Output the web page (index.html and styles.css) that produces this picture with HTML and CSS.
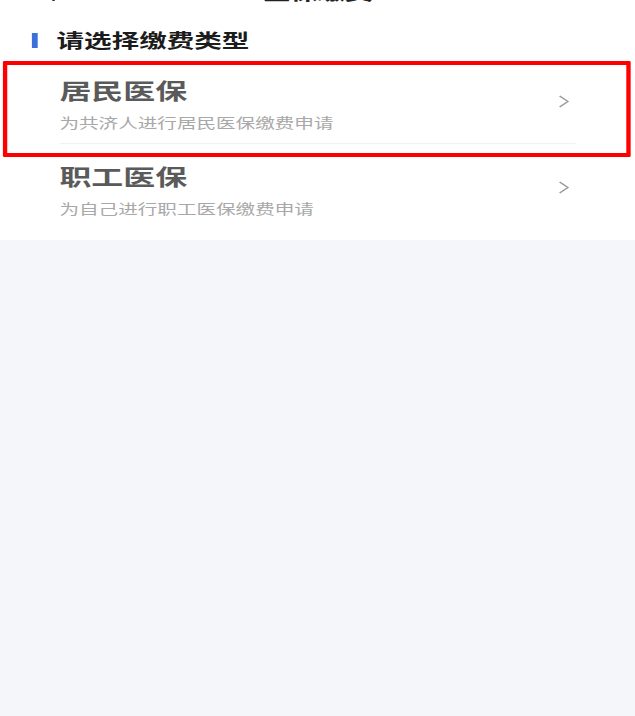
FILE: index.html
```html
<!DOCTYPE html>
<html lang="zh-CN">
<head>
<meta charset="utf-8">
<title>医保缴费</title>
<link rel="stylesheet" href="styles.css">
</head>
<body>
<div class="page">
  <section class="sheet">
    <header class="navbar">
      <span class="nav-back">
        <svg width="10" height="18" viewBox="0 0 10 18"><path d="M9 1 L1.5 9 L9 17" fill="none" stroke="#333" stroke-width="2" stroke-linecap="round" stroke-linejoin="round"/></svg>
      </span>
      <h1 class="nav-title">医保缴费</h1>
      <span class="nav-space"></span>
    </header>
    <div class="section-head">
      <span class="section-bar"></span>
      <h2 class="section-title">请选择缴费类型</h2>
    </div>
    <ul class="type-list">
      <li class="type-item">
        <div class="type-text">
          <div class="type-name">居民医保</div>
          <div class="type-desc">为共济人进行居民医保缴费申请</div>
        </div>
        <svg class="chev" width="8" height="13" viewBox="0 0 8 13"><path d="M1 1 L6.8 6.5 L1 12" fill="none" stroke="#9a9a9a" stroke-width="1.1"/></svg>
      </li>
      <li class="type-item">
        <div class="type-text">
          <div class="type-name">职工医保</div>
          <div class="type-desc">为自己进行职工医保缴费申请</div>
        </div>
        <svg class="chev" width="8" height="13" viewBox="0 0 8 13"><path d="M1 1 L6.8 6.5 L1 12" fill="none" stroke="#9a9a9a" stroke-width="1.1"/></svg>
      </li>
      <li class="highlight" aria-hidden="true"></li>
    </ul>
  </section>
</div>
</body>
</html>
```

FILE: styles.css
```css
html, body {
  margin: 0;
  padding: 0;
}
body {
  background: #f5f6fa;
  font-family: "Noto Sans CJK SC", "Noto Sans", sans-serif;
}
.page {
  width: 438px;
  transform: scaleX(1.4498);
  transform-origin: 0 0;
}
.sheet {
  background: #ffffff;
  padding-bottom: 11px;
}
.navbar {
  height: 40px;
  margin-top: -28px;
  display: flex;
  align-items: center;
  padding: 0 20px;
}
.nav-back {
  width: 30px;
  display: flex;
  align-items: center;
  padding-left: 8px;
}
.nav-title {
  flex: 1;
  margin: 0;
  text-align: center;
  font-size: 19px;
  font-weight: bold;
  color: #222;
  line-height: 40px;
}
.nav-space {
  width: 38px;
}
.section-head {
  display: flex;
  align-items: center;
  padding: 15px 0 0 22px;
  height: 26px;
}
.section-bar {
  width: 4px;
  height: 15px;
  background: #3b6fd9;
  margin-right: 13px;
}
.section-title {
  margin: 0;
  font-size: 19px;
  line-height: 26px;
  font-weight: bold;
  color: #1c1c1c;
}
.type-list {
  list-style: none;
  margin: 5px 0 0;
  padding: 0;
  position: relative;
}
.type-item {
  margin: 0 41px;
  padding: 17px 0 12px;
  display: flex;
  align-items: center;
  justify-content: space-between;
}
.type-item:first-child {
  border-bottom: 1px solid #f1f1f1;
}
.type-name {
  font-size: 22px;
  line-height: 28px;
  font-weight: bold;
  color: #5a5a5a;
}
.type-desc {
  margin-top: 10px;
  font-size: 13.5px;
  line-height: 18px;
  color: #a8a8a8;
}
.chev {
  margin-right: 4px;
  margin-top: -4px;
}
.highlight {
  position: absolute;
  left: 2px;
  right: 3px;
  top: 3px;
  height: 88px;
  border: 3px solid #ff0000;
  border-top-width: 4px;
  border-bottom-width: 4px;
  border-radius: 1px;
}
```
